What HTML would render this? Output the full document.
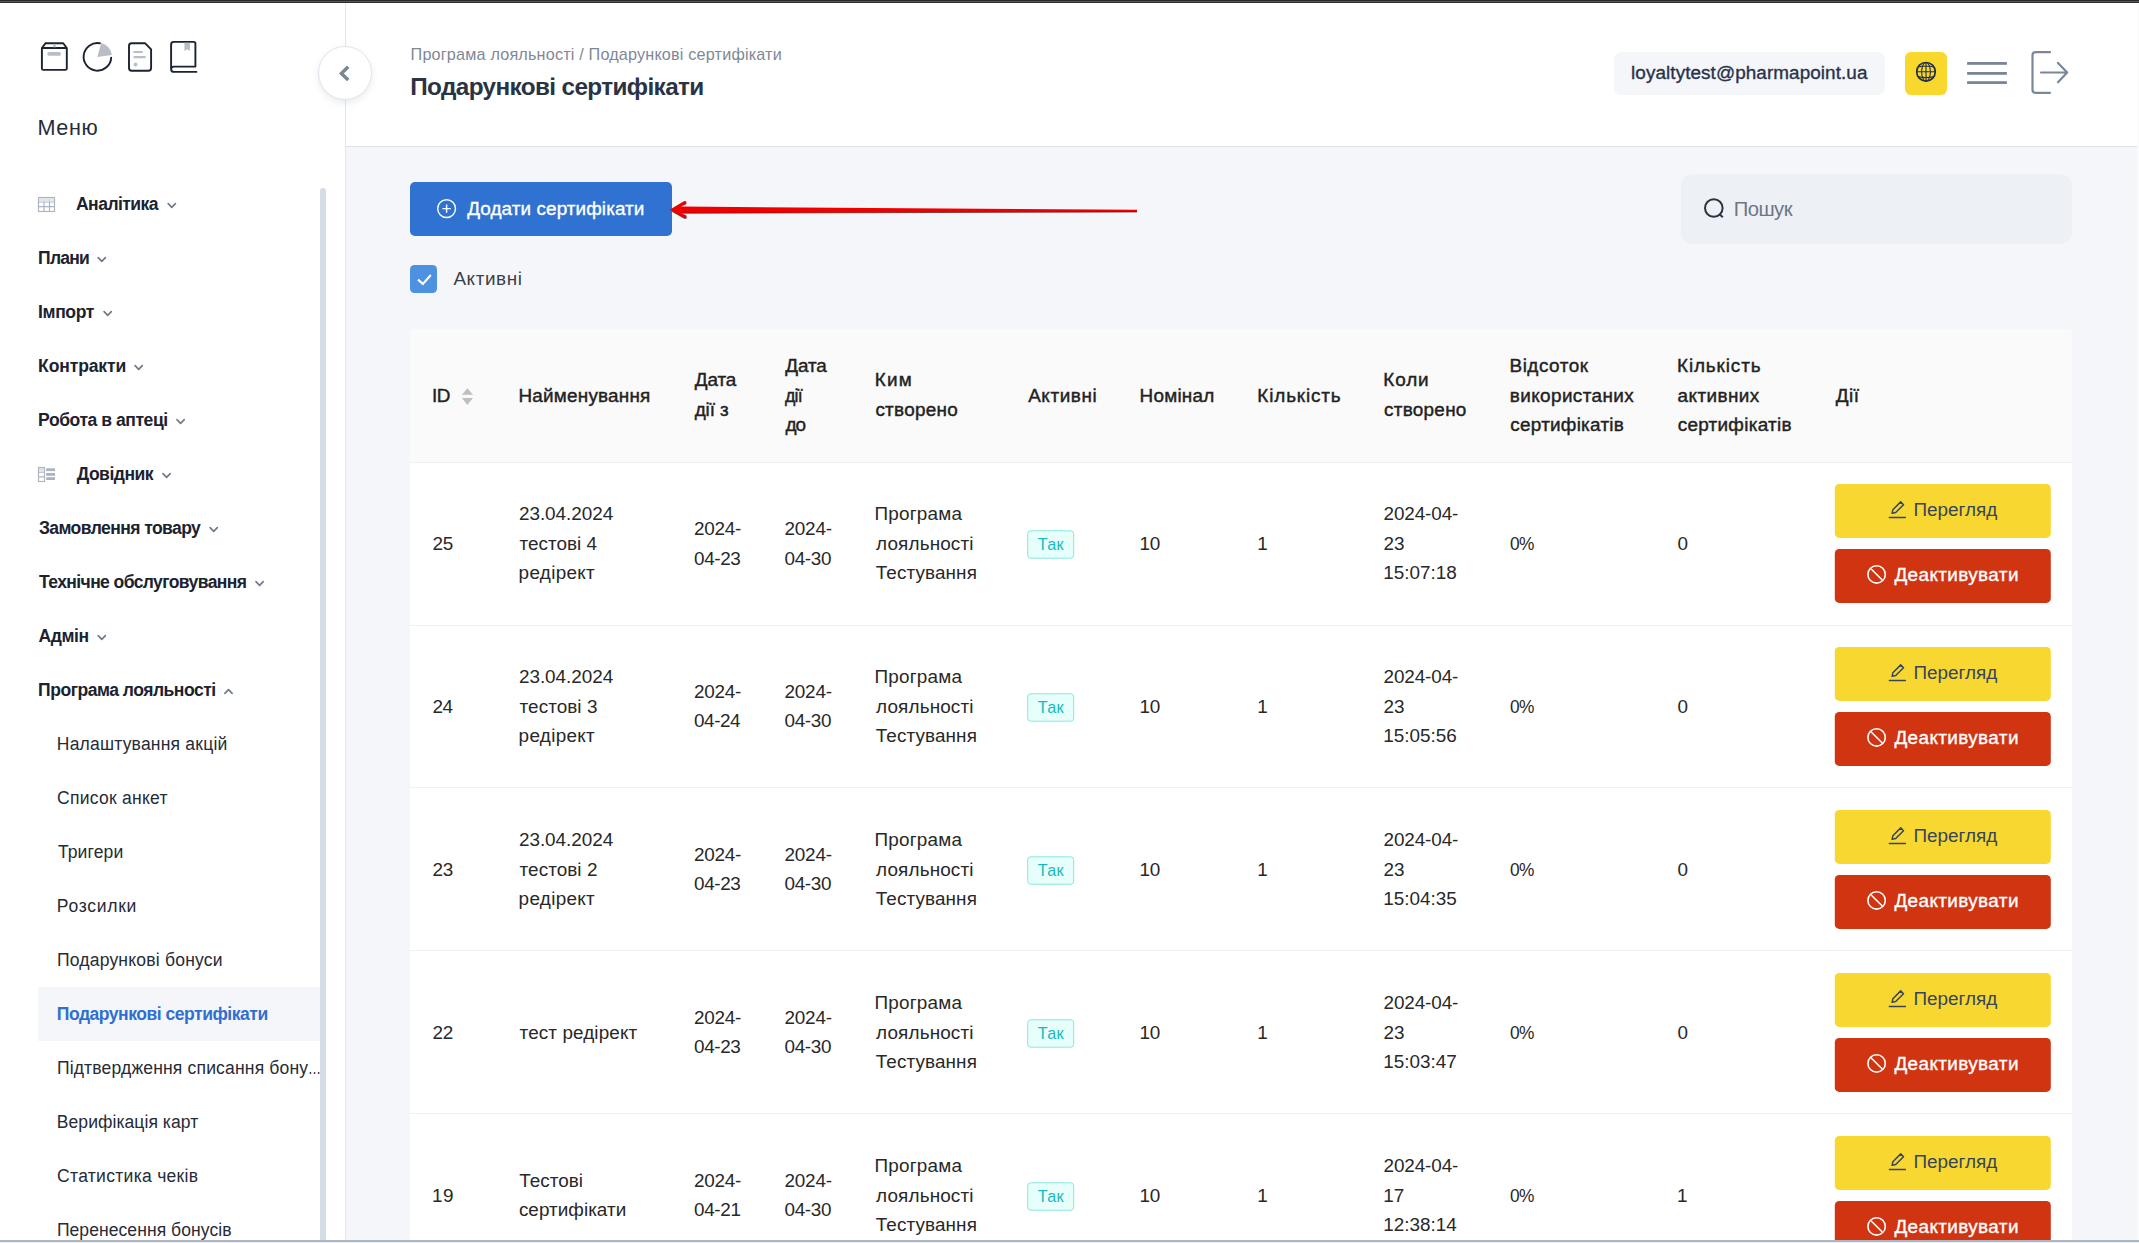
<!DOCTYPE html>
<html lang="uk"><head><meta charset="utf-8"><title>Подарункові сертифікати</title>
<style>
html,body{margin:0;padding:0;}
body{width:2139px;height:1243px;overflow:hidden;position:relative;background:#f5f6fa;font-family:"Liberation Sans",sans-serif;}
.abs{position:absolute;}
.t{position:absolute;white-space:nowrap;margin:0;padding:0;}
.med{-webkit-text-stroke:0.35px currentColor;}
.th{-webkit-text-stroke:0.42px currentColor;}
#side{left:0;top:3px;width:345px;height:1240px;background:#fff;border-right:1px solid #e3e7ee;}
#head{left:346px;top:3px;width:1791px;height:143px;background:#fff;border-bottom:1px solid #dfe5ec;}
#gfx{position:absolute;left:0;top:0;}
</style></head><body>
<div class="abs" id="side"></div>
<div class="abs" id="head"></div>
<div class="abs" style="left:38px;top:987px;width:282px;height:54px;background:#f5f6fa;"></div>
<div class="abs" style="left:318.5px;top:46.5px;width:52px;height:52px;border-radius:50%;background:#fff;border:1px solid #dfe5ed;box-sizing:content-box;box-shadow:0 3px 7px rgba(120,135,160,0.16);margin:-1px 0 0 -1px;"></div>
<div class="abs" style="left:1614px;top:52px;width:271px;height:43px;background:#f5f6fa;border-radius:7px;"></div>
<div class="abs" style="left:1905px;top:52px;width:42px;height:43px;background:#f9d82e;border-radius:6px;"></div>
<div class="abs" style="left:410px;top:182px;width:262px;height:54px;background:#2f72d2;border-radius:5px;"></div>
<div class="abs" style="left:1681px;top:174px;width:391px;height:70px;background:#edf0f5;border-radius:12px;"></div>
<div class="abs" style="left:410px;top:265px;width:27px;height:27.5px;background:#4e90e1;border-radius:4.5px;"></div>
<div class="abs" style="left:410px;top:329px;width:1662px;height:133px;background:#fafafa;border-radius:3px 3px 0 0;"></div>
<div class="abs" style="left:410px;top:462px;width:1662px;height:790px;background:#fff;"></div>
<div class="abs" style="left:410px;top:462px;width:1662px;height:1px;background:#f0f0f0;"></div>
<div class="abs" style="left:410px;top:625px;width:1662px;height:1px;background:#f0f0f0;"></div>
<div class="abs" style="left:410px;top:787px;width:1662px;height:1px;background:#f0f0f0;"></div>
<div class="abs" style="left:410px;top:950px;width:1662px;height:1px;background:#f0f0f0;"></div>
<div class="abs" style="left:410px;top:1113px;width:1662px;height:1px;background:#f0f0f0;"></div>
<svg id="gfx" width="2139" height="1243" viewBox="0 0 2139 1243">
<!-- sidebar top icons -->
<g fill="none" stroke="#1b2332" stroke-width="1.9" stroke-linejoin="round" stroke-linecap="round">
<path d="M41.9 48 L45.6 43.2 H63.2 L66.8 48 V68.4 Q66.8 69.9 65.3 69.9 H43.4 Q41.9 69.9 41.9 68.4 Z M41.9 48 H66.8"/>
<path d="M99.9 43.3 A13.8 13.8 0 1 0 111.2 57.6" />
<path d="M131.6 43.2 H145 L151.1 49.4 V68 Q151.1 70.7 148.4 70.7 H131.6 Q129 70.7 129 68 V45.9 Q129 43.2 131.6 43.2 Z"/>
<path d="M196.4 71.9 H174 Q171.1 71.9 171.1 69.2 V44.4 Q171.1 41.9 173.8 41.9 H193.6 Q195.4 41.9 195.4 43.6 V66.6 H174 Q171.1 66.6 171.1 69.2"/>
</g>
<g fill="#b9bdc5" stroke="none">
<rect x="47.3" y="52" width="13.7" height="3.8" rx="1.9"/>
<rect x="53.3" y="43.9" width="2.4" height="3.4" />
<path d="M97.3 56.9 L101.2 42.9 A14.6 14.6 0 0 1 111.8 54.9 Z"/>
<rect x="133.5" y="50.9" width="9.3" height="2.1" rx="0.6"/>
<rect x="133.5" y="56.1" width="12.2" height="2.1" rx="0.6"/>
<circle cx="135.5" cy="64.5" r="1.9"/>
<path d="M184.4 42.8 H189.9 V51 L187.15 49.2 L184.4 51 Z"/>
</g>
<!-- collapse chevron -->
<path d="M348.2 66.7 L341.4 73.4 L348.2 80.1" fill="none" stroke="#7b8795" stroke-width="3.5" stroke-linejoin="miter"/>
<!-- small menu icons -->
<g fill="none" stroke="#adb4c1" stroke-width="1.15">
<rect x="38.5" y="197.5" width="16" height="14"/>
<path d="M44 197.5 V211.5 M49.5 197.5 V211.5 M38.5 202 H54.5 M38.5 206.6 H54.5"/>
<rect x="38.5" y="467.5" width="6" height="14"/>
<path d="M38.5 472.2 H44.5 M38.5 476.8 H44.5"/>
</g>
<rect x="39" y="198" width="15" height="3.6" fill="#dfe3ea" opacity="0.9"/>
<rect x="39" y="468" width="5" height="3.8" fill="#dfe3ea"/>
<g fill="#aab2bf">
<rect x="46.2" y="468.3" width="8.8" height="2.8"/>
<rect x="46.2" y="473" width="8.8" height="2.8"/>
<rect x="46.2" y="477.2" width="8.8" height="2.8"/>
</g>
<!-- globe -->
<g fill="none" stroke="#232f4a" stroke-width="1.1">
<circle cx="1926" cy="71.8" r="9.3" stroke-width="1.7"/>
<ellipse cx="1926" cy="71.8" rx="4.4" ry="9.3"/>
<path d="M1926 62.4 V81.2 M1916.6 71.8 H1935.4 M1918 67 Q1926 65 1934 67 M1918 76.6 Q1926 78.6 1934 76.6"/>
</g>
<!-- hamburger -->
<g fill="#788698">
<rect x="1967.1" y="62" width="39.8" height="2.8"/>
<rect x="1967.1" y="72" width="39.8" height="2.8"/>
<rect x="1967.1" y="81.2" width="39.8" height="2.8"/>
</g>
<!-- logout -->
<g fill="none" stroke="#7a8797" stroke-width="2.2" stroke-linecap="round" stroke-linejoin="round">
<path d="M2050 52.2 H2035.5 Q2032.5 52.2 2032.5 55.2 V89.8 Q2032.5 92.8 2035.5 92.8 H2050"/>
<path d="M2041 72.5 H2067 M2058 62.9 L2067.2 72.5 L2058 82.3"/>
</g>
<!-- plus-circle -->
<g fill="none" stroke="#ffffff" stroke-width="1.4">
<circle cx="446.6" cy="208.6" r="8.9"/>
<path d="M446.6 204.4 V212.8 M442.4 208.6 H450.8"/>
</g>
<!-- red arrow -->
<path d="M669.6 209.7 L683.9 201.2 Q686.5 200.2 686.5 203 L686.2 204.3 L680.9 206.6 L1137 209.7 L1137 211.9 L680.9 213.3 L686.2 215.3 L686.5 216.6 Q686.5 219.2 683.9 218.1 Z" fill="#ee0000"/>
<path d="M672 211.2 L683.9 218.1 Q686.3 219 686.5 216.8 M681.5 213.3 L1137 211.9" fill="none" stroke="#5e2020" stroke-width="1.1" opacity="0.7"/>
<!-- search icon -->
<g fill="none" stroke="#2a3442" stroke-width="2">
<circle cx="1713.8" cy="208" r="8.8"/>
<path d="M1719.6 214.2 L1722.8 217.2"/>
</g>
<!-- checkbox tick -->
<path d="M418 279.6 L422.9 283.9 L430.8 275" fill="none" stroke="#fff" stroke-width="2.1"/>
<!-- sort icon -->
<path d="M467.4 388.2 L473 394.7 H461.9 Z M461.9 397.9 H473 L467.4 404.9 Z" fill="#bfbfbf"/>
<path d="M168.20000000000002 203.7 L171.8 207.3 L175.4 203.7" fill="none" stroke="#6f7a89" stroke-width="1.7" stroke-linecap="round" stroke-linejoin="round"/>
<path d="M98.2 257.7 L101.8 261.3 L105.39999999999999 257.7" fill="none" stroke="#6f7a89" stroke-width="1.7" stroke-linecap="round" stroke-linejoin="round"/>
<path d="M104.10000000000001 311.7 L107.7 315.3 L111.3 311.7" fill="none" stroke="#6f7a89" stroke-width="1.7" stroke-linecap="round" stroke-linejoin="round"/>
<path d="M135.1 365.7 L138.7 369.3 L142.29999999999998 365.7" fill="none" stroke="#6f7a89" stroke-width="1.7" stroke-linecap="round" stroke-linejoin="round"/>
<path d="M177.0 419.7 L180.6 423.3 L184.2 419.7" fill="none" stroke="#6f7a89" stroke-width="1.7" stroke-linecap="round" stroke-linejoin="round"/>
<path d="M163.0 473.7 L166.6 477.3 L170.2 473.7" fill="none" stroke="#6f7a89" stroke-width="1.7" stroke-linecap="round" stroke-linejoin="round"/>
<path d="M210.1 527.7 L213.7 531.3 L217.29999999999998 527.7" fill="none" stroke="#6f7a89" stroke-width="1.7" stroke-linecap="round" stroke-linejoin="round"/>
<path d="M256.0 581.7 L259.6 585.3 L263.20000000000005 581.7" fill="none" stroke="#6f7a89" stroke-width="1.7" stroke-linecap="round" stroke-linejoin="round"/>
<path d="M98.2 635.7 L101.8 639.3 L105.39999999999999 635.7" fill="none" stroke="#6f7a89" stroke-width="1.7" stroke-linecap="round" stroke-linejoin="round"/>
<path d="M224.9 693.3 L228.5 689.7 L232.1 693.3" fill="none" stroke="#6f7a89" stroke-width="1.7" stroke-linecap="round" stroke-linejoin="round"/>
<rect x="1027.7" y="530.80" width="46" height="27.4" rx="3" fill="#e6fffb" stroke="#87e8de" stroke-width="1"/>
<rect x="1834.8" y="483.90" width="216" height="54" rx="4.5" fill="#f8d830"/>
<rect x="1834.8" y="548.90" width="216" height="54" rx="4.5" fill="#d03411"/>
<g fill="none" stroke="#36465a" stroke-width="1.5" stroke-linecap="round" stroke-linejoin="round"><path d="M1889.40 517.50 H1905.40"/><path d="M1892.10 513.30 L1892.90 509.70 L1900.70 501.90 L1903.50 504.70 L1895.70 512.50 Z"/></g>
<g fill="none" stroke="#ffffff" stroke-width="1.6"><circle cx="1876.6" cy="574.40" r="8.7"/><path d="M1870.45 568.25 L1882.75 580.55"/></g>
<rect x="1027.7" y="693.80" width="46" height="27.4" rx="3" fill="#e6fffb" stroke="#87e8de" stroke-width="1"/>
<rect x="1834.8" y="646.90" width="216" height="54" rx="4.5" fill="#f8d830"/>
<rect x="1834.8" y="711.90" width="216" height="54" rx="4.5" fill="#d03411"/>
<g fill="none" stroke="#36465a" stroke-width="1.5" stroke-linecap="round" stroke-linejoin="round"><path d="M1889.40 680.50 H1905.40"/><path d="M1892.10 676.30 L1892.90 672.70 L1900.70 664.90 L1903.50 667.70 L1895.70 675.50 Z"/></g>
<g fill="none" stroke="#ffffff" stroke-width="1.6"><circle cx="1876.6" cy="737.40" r="8.7"/><path d="M1870.45 731.25 L1882.75 743.55"/></g>
<rect x="1027.7" y="856.80" width="46" height="27.4" rx="3" fill="#e6fffb" stroke="#87e8de" stroke-width="1"/>
<rect x="1834.8" y="809.90" width="216" height="54" rx="4.5" fill="#f8d830"/>
<rect x="1834.8" y="874.90" width="216" height="54" rx="4.5" fill="#d03411"/>
<g fill="none" stroke="#36465a" stroke-width="1.5" stroke-linecap="round" stroke-linejoin="round"><path d="M1889.40 843.50 H1905.40"/><path d="M1892.10 839.30 L1892.90 835.70 L1900.70 827.90 L1903.50 830.70 L1895.70 838.50 Z"/></g>
<g fill="none" stroke="#ffffff" stroke-width="1.6"><circle cx="1876.6" cy="900.40" r="8.7"/><path d="M1870.45 894.25 L1882.75 906.55"/></g>
<rect x="1027.7" y="1019.80" width="46" height="27.4" rx="3" fill="#e6fffb" stroke="#87e8de" stroke-width="1"/>
<rect x="1834.8" y="972.90" width="216" height="54" rx="4.5" fill="#f8d830"/>
<rect x="1834.8" y="1037.90" width="216" height="54" rx="4.5" fill="#d03411"/>
<g fill="none" stroke="#36465a" stroke-width="1.5" stroke-linecap="round" stroke-linejoin="round"><path d="M1889.40 1006.50 H1905.40"/><path d="M1892.10 1002.30 L1892.90 998.70 L1900.70 990.90 L1903.50 993.70 L1895.70 1001.50 Z"/></g>
<g fill="none" stroke="#ffffff" stroke-width="1.6"><circle cx="1876.6" cy="1063.40" r="8.7"/><path d="M1870.45 1057.25 L1882.75 1069.55"/></g>
<rect x="1027.7" y="1182.80" width="46" height="27.4" rx="3" fill="#e6fffb" stroke="#87e8de" stroke-width="1"/>
<rect x="1834.8" y="1135.90" width="216" height="54" rx="4.5" fill="#f8d830"/>
<rect x="1834.8" y="1200.90" width="216" height="54" rx="4.5" fill="#d03411"/>
<g fill="none" stroke="#36465a" stroke-width="1.5" stroke-linecap="round" stroke-linejoin="round"><path d="M1889.40 1169.50 H1905.40"/><path d="M1892.10 1165.30 L1892.90 1161.70 L1900.70 1153.90 L1903.50 1156.70 L1895.70 1164.50 Z"/></g>
<g fill="none" stroke="#ffffff" stroke-width="1.6"><circle cx="1876.6" cy="1226.40" r="8.7"/><path d="M1870.45 1220.25 L1882.75 1232.55"/></g>
</svg>
<nav>
<span class="t" style="left:37.5px;top:112px;font-size:21.6px;line-height:31px;color:#252c3a;letter-spacing:0.633px;">Меню</span>
<span class="t" style="left:76.0px;top:189px;font-size:17.55px;line-height:30px;font-weight:700;color:#1b2230;letter-spacing:-0.537px;">Аналітика</span>
<span class="t" style="left:38.1px;top:243px;font-size:17.55px;line-height:30px;font-weight:700;color:#1b2230;letter-spacing:-0.778px;">Плани</span>
<span class="t" style="left:38.1px;top:297px;font-size:17.55px;line-height:30px;font-weight:700;color:#1b2230;letter-spacing:-0.388px;">Імпорт</span>
<span class="t" style="left:38.1px;top:351px;font-size:17.55px;line-height:30px;font-weight:700;color:#1b2230;letter-spacing:-0.133px;">Контракти</span>
<span class="t" style="left:38.1px;top:405px;font-size:17.55px;line-height:30px;font-weight:700;color:#1b2230;letter-spacing:-0.444px;">Робота в аптеці</span>
<span class="t" style="left:76.7px;top:459px;font-size:17.55px;line-height:30px;font-weight:700;color:#1b2230;letter-spacing:-0.491px;">Довідник</span>
<span class="t" style="left:38.9px;top:513px;font-size:17.55px;line-height:30px;font-weight:700;color:#1b2230;letter-spacing:-0.583px;">Замовлення товару</span>
<span class="t" style="left:39.0px;top:567px;font-size:17.55px;line-height:30px;font-weight:700;color:#1b2230;letter-spacing:-0.602px;">Технічне обслуговування</span>
<span class="t" style="left:38.6px;top:621px;font-size:17.55px;line-height:30px;font-weight:700;color:#1b2230;letter-spacing:-0.459px;">Адмін</span>
<span class="t" style="left:38.1px;top:675px;font-size:17.55px;line-height:30px;font-weight:700;color:#1b2230;letter-spacing:-0.492px;">Програма лояльності</span>
<span class="t" style="left:307.6px;top:1053px;font-size:17.55px;line-height:30px;color:#262b36;transform:scaleX(0.740);transform-origin:0 50%;">…</span>
<span class="t" style="left:56.8px;top:729px;font-size:17.55px;line-height:30px;color:#262b36;letter-spacing:0.194px;">Налаштування акцій</span>
<span class="t" style="left:57.1px;top:783px;font-size:17.55px;line-height:30px;color:#262b36;letter-spacing:0.246px;">Список анкет</span>
<span class="t" style="left:57.9px;top:837px;font-size:17.55px;line-height:30px;color:#262b36;letter-spacing:0.126px;">Тригери</span>
<span class="t" style="left:56.8px;top:891px;font-size:17.55px;line-height:30px;color:#262b36;letter-spacing:0.705px;">Розсилки</span>
<span class="t" style="left:56.9px;top:945px;font-size:17.55px;line-height:30px;color:#262b36;letter-spacing:0.202px;">Подарункові бонуси</span>
<span class="t" style="left:56.8px;top:999px;font-size:17.55px;line-height:30px;font-weight:700;color:#2f6fd1;letter-spacing:-0.481px;">Подарункові сертифікати</span>
<span class="t" style="left:56.9px;top:1053px;font-size:17.55px;line-height:30px;color:#262b36;letter-spacing:0.162px;">Підтвердження списання бону</span>
<span class="t" style="left:56.8px;top:1107px;font-size:17.55px;line-height:30px;color:#262b36;letter-spacing:0.055px;">Верифікація карт</span>
<span class="t" style="left:57.1px;top:1161px;font-size:17.55px;line-height:30px;color:#262b36;letter-spacing:0.283px;">Статистика чеків</span>
<span class="t" style="left:56.9px;top:1215px;font-size:17.55px;line-height:30px;color:#262b36;letter-spacing:0.059px;">Перенесення бонусів</span>
</nav>
<header>
<span class="t" style="left:410.6px;top:39px;font-size:16.2px;line-height:30px;color:#7f8896;letter-spacing:0.181px;">Програма лояльності / Подарункові сертифікати</span>
<span class="t" style="left:410.2px;top:71px;font-size:24.3px;line-height:31px;font-weight:700;color:#2a3344;letter-spacing:-0.616px;">Подарункові сертифікати</span>
<span class="t med" style="left:1631.1px;top:57px;font-size:18.9px;line-height:31px;color:#28324a;letter-spacing:0.075px;">loyaltytest@pharmapoint.ua</span>
</header>
<main>
<span class="t med" style="left:467.2px;top:193px;font-size:18.9px;line-height:31px;color:#ffffff;letter-spacing:0.094px;">Додати сертифікати</span>
<span class="t" style="left:1733.7px;top:194px;font-size:20.2px;line-height:30px;color:#6c7686;letter-spacing:-0.500px;">Пошук</span>
<span class="t" style="left:453.4px;top:263px;font-size:18.9px;line-height:31px;color:#3a3f4a;letter-spacing:0.613px;">Активні</span>
<span class="t th" style="left:432.0px;top:380px;font-size:18.9px;line-height:31px;color:#222222;letter-spacing:-0.542px;">ID</span>
<span class="t th" style="left:518.5px;top:380px;font-size:18.9px;line-height:31px;color:#222222;letter-spacing:0.211px;">Найменування</span>
<span class="t th" style="left:694.8px;top:364px;font-size:18.9px;line-height:31px;color:#222222;letter-spacing:-0.150px;">Дата</span>
<span class="t th" style="left:694.7px;top:394px;font-size:18.9px;line-height:31px;color:#222222;letter-spacing:-0.092px;">дії з</span>
<span class="t th" style="left:785.3px;top:350px;font-size:18.9px;line-height:31px;color:#222222;letter-spacing:-0.088px;">Дата</span>
<span class="t th" style="left:785.3px;top:380px;font-size:18.9px;line-height:31px;color:#222222;letter-spacing:-0.864px;transform:scaleX(0.939);transform-origin:0 50%;">дії</span>
<span class="t th" style="left:785.4px;top:409px;font-size:18.9px;line-height:31px;color:#222222;letter-spacing:-0.810px;">до</span>
<span class="t th" style="left:874.8px;top:364px;font-size:18.9px;line-height:31px;color:#222222;letter-spacing:1.200px;">Ким</span>
<span class="t th" style="left:875.4px;top:394px;font-size:18.9px;line-height:31px;color:#222222;letter-spacing:0.272px;">створено</span>
<span class="t th" style="left:1028.2px;top:380px;font-size:18.9px;line-height:31px;color:#222222;letter-spacing:0.582px;">Активні</span>
<span class="t th" style="left:1139.6px;top:380px;font-size:18.9px;line-height:31px;color:#222222;letter-spacing:0.226px;">Номінал</span>
<span class="t th" style="left:1257.3px;top:380px;font-size:18.9px;line-height:31px;color:#222222;letter-spacing:0.869px;">Кількість</span>
<span class="t th" style="left:1383.3px;top:364px;font-size:18.9px;line-height:31px;color:#222222;letter-spacing:0.897px;">Коли</span>
<span class="t th" style="left:1384.1px;top:394px;font-size:18.9px;line-height:31px;color:#222222;letter-spacing:0.269px;">створено</span>
<span class="t th" style="left:1509.5px;top:350px;font-size:18.9px;line-height:31px;color:#222222;letter-spacing:0.530px;">Відсоток</span>
<span class="t th" style="left:1509.8px;top:380px;font-size:18.9px;line-height:31px;color:#222222;letter-spacing:0.407px;">використаних</span>
<span class="t th" style="left:1510.3px;top:409px;font-size:18.9px;line-height:31px;color:#222222;letter-spacing:0.262px;">сертифікатів</span>
<span class="t th" style="left:1677.0px;top:350px;font-size:18.9px;line-height:31px;color:#222222;letter-spacing:0.881px;">Кількість</span>
<span class="t th" style="left:1677.6px;top:380px;font-size:18.9px;line-height:31px;color:#222222;letter-spacing:0.428px;">активних</span>
<span class="t th" style="left:1677.7px;top:409px;font-size:18.9px;line-height:31px;color:#222222;letter-spacing:0.286px;">сертифікатів</span>
<span class="t th" style="left:1835.8px;top:380px;font-size:18.9px;line-height:31px;color:#222222;letter-spacing:0.515px;">Дії</span>
<span class="t" style="left:432.4px;top:528px;font-size:18.9px;line-height:31px;color:#282828;letter-spacing:-0.189px;">25</span>
<span class="t" style="left:518.9px;top:498px;font-size:18.9px;line-height:31px;color:#282828;letter-spacing:-0.012px;">23.04.2024</span>
<span class="t" style="left:519.6px;top:528px;font-size:18.9px;line-height:31px;color:#282828;letter-spacing:0.020px;">тестові 4</span>
<span class="t" style="left:518.6px;top:557px;font-size:18.9px;line-height:31px;color:#282828;letter-spacing:0.311px;">редірект</span>
<span class="t" style="left:693.9px;top:513px;font-size:18.9px;line-height:31px;color:#282828;letter-spacing:-0.222px;">2024-</span>
<span class="t" style="left:694.1px;top:543px;font-size:18.9px;line-height:31px;color:#282828;letter-spacing:-0.393px;">04-23</span>
<span class="t" style="left:784.4px;top:513px;font-size:18.9px;line-height:31px;color:#282828;letter-spacing:-0.175px;">2024-</span>
<span class="t" style="left:784.5px;top:543px;font-size:18.9px;line-height:31px;color:#282828;letter-spacing:-0.337px;">04-30</span>
<span class="t" style="left:874.5px;top:498px;font-size:18.9px;line-height:31px;color:#282828;letter-spacing:0.216px;">Програма</span>
<span class="t" style="left:876.1px;top:528px;font-size:18.9px;line-height:31px;color:#282828;letter-spacing:0.141px;">лояльності</span>
<span class="t" style="left:875.7px;top:557px;font-size:18.9px;line-height:31px;color:#282828;letter-spacing:0.117px;">Тестування</span>
<span class="t" style="left:1037.8px;top:529px;font-size:16.2px;line-height:30px;color:#16b9bd;letter-spacing:0.250px;">Так</span>
<span class="t" style="left:1139.5px;top:528px;font-size:18.9px;line-height:31px;color:#282828;letter-spacing:-0.179px;">10</span>
<span class="t" style="left:1257.2px;top:528px;font-size:18.9px;line-height:31px;color:#282828;">1</span>
<span class="t" style="left:1383.6px;top:498px;font-size:18.9px;line-height:31px;color:#282828;letter-spacing:-0.124px;">2024-04-</span>
<span class="t" style="left:1383.6px;top:528px;font-size:18.9px;line-height:31px;color:#282828;">23</span>
<span class="t" style="left:1383.2px;top:557px;font-size:18.9px;line-height:31px;color:#282828;">15:07:18</span>
<span class="t" style="left:1510.2px;top:528px;font-size:18.9px;line-height:31px;color:#282828;letter-spacing:-0.700px;transform:scaleX(0.916);transform-origin:0 50%;">0%</span>
<span class="t" style="left:1677.6px;top:528px;font-size:18.9px;line-height:31px;color:#282828;">0</span>
<span class="t" style="left:1913.5px;top:494px;font-size:18.9px;line-height:31px;color:#36465a;letter-spacing:0.001px;">Перегляд</span>
<span class="t med" style="left:1894.4px;top:559px;font-size:18.9px;line-height:31px;color:#ffffff;letter-spacing:0.397px;">Деактивувати</span>
<span class="t" style="left:432.4px;top:691px;font-size:18.9px;line-height:31px;color:#282828;letter-spacing:-0.416px;">24</span>
<span class="t" style="left:518.9px;top:661px;font-size:18.9px;line-height:31px;color:#282828;letter-spacing:-0.012px;">23.04.2024</span>
<span class="t" style="left:519.6px;top:691px;font-size:18.9px;line-height:31px;color:#282828;letter-spacing:0.061px;">тестові 3</span>
<span class="t" style="left:518.6px;top:720px;font-size:18.9px;line-height:31px;color:#282828;letter-spacing:0.311px;">редірект</span>
<span class="t" style="left:693.9px;top:676px;font-size:18.9px;line-height:31px;color:#282828;letter-spacing:-0.222px;">2024-</span>
<span class="t" style="left:694.1px;top:705px;font-size:18.9px;line-height:31px;color:#282828;letter-spacing:-0.479px;">04-24</span>
<span class="t" style="left:784.4px;top:676px;font-size:18.9px;line-height:31px;color:#282828;letter-spacing:-0.175px;">2024-</span>
<span class="t" style="left:784.5px;top:705px;font-size:18.9px;line-height:31px;color:#282828;letter-spacing:-0.337px;">04-30</span>
<span class="t" style="left:874.5px;top:661px;font-size:18.9px;line-height:31px;color:#282828;letter-spacing:0.216px;">Програма</span>
<span class="t" style="left:876.1px;top:691px;font-size:18.9px;line-height:31px;color:#282828;letter-spacing:0.141px;">лояльності</span>
<span class="t" style="left:875.7px;top:720px;font-size:18.9px;line-height:31px;color:#282828;letter-spacing:0.117px;">Тестування</span>
<span class="t" style="left:1037.8px;top:692px;font-size:16.2px;line-height:30px;color:#16b9bd;letter-spacing:0.250px;">Так</span>
<span class="t" style="left:1139.5px;top:691px;font-size:18.9px;line-height:31px;color:#282828;letter-spacing:-0.179px;">10</span>
<span class="t" style="left:1257.2px;top:691px;font-size:18.9px;line-height:31px;color:#282828;">1</span>
<span class="t" style="left:1383.6px;top:661px;font-size:18.9px;line-height:31px;color:#282828;letter-spacing:-0.124px;">2024-04-</span>
<span class="t" style="left:1383.6px;top:691px;font-size:18.9px;line-height:31px;color:#282828;">23</span>
<span class="t" style="left:1383.2px;top:720px;font-size:18.9px;line-height:31px;color:#282828;">15:05:56</span>
<span class="t" style="left:1510.2px;top:691px;font-size:18.9px;line-height:31px;color:#282828;letter-spacing:-0.700px;transform:scaleX(0.916);transform-origin:0 50%;">0%</span>
<span class="t" style="left:1677.6px;top:691px;font-size:18.9px;line-height:31px;color:#282828;">0</span>
<span class="t" style="left:1913.5px;top:657px;font-size:18.9px;line-height:31px;color:#36465a;letter-spacing:0.001px;">Перегляд</span>
<span class="t med" style="left:1894.4px;top:722px;font-size:18.9px;line-height:31px;color:#ffffff;letter-spacing:0.397px;">Деактивувати</span>
<span class="t" style="left:432.4px;top:854px;font-size:18.9px;line-height:31px;color:#282828;letter-spacing:-0.080px;">23</span>
<span class="t" style="left:518.9px;top:824px;font-size:18.9px;line-height:31px;color:#282828;letter-spacing:-0.012px;">23.04.2024</span>
<span class="t" style="left:519.6px;top:854px;font-size:18.9px;line-height:31px;color:#282828;letter-spacing:0.058px;">тестові 2</span>
<span class="t" style="left:518.6px;top:883px;font-size:18.9px;line-height:31px;color:#282828;letter-spacing:0.311px;">редірект</span>
<span class="t" style="left:693.9px;top:839px;font-size:18.9px;line-height:31px;color:#282828;letter-spacing:-0.222px;">2024-</span>
<span class="t" style="left:694.1px;top:868px;font-size:18.9px;line-height:31px;color:#282828;letter-spacing:-0.393px;">04-23</span>
<span class="t" style="left:784.4px;top:839px;font-size:18.9px;line-height:31px;color:#282828;letter-spacing:-0.175px;">2024-</span>
<span class="t" style="left:784.5px;top:868px;font-size:18.9px;line-height:31px;color:#282828;letter-spacing:-0.337px;">04-30</span>
<span class="t" style="left:874.5px;top:824px;font-size:18.9px;line-height:31px;color:#282828;letter-spacing:0.216px;">Програма</span>
<span class="t" style="left:876.1px;top:854px;font-size:18.9px;line-height:31px;color:#282828;letter-spacing:0.141px;">лояльності</span>
<span class="t" style="left:875.7px;top:883px;font-size:18.9px;line-height:31px;color:#282828;letter-spacing:0.117px;">Тестування</span>
<span class="t" style="left:1037.8px;top:855px;font-size:16.2px;line-height:30px;color:#16b9bd;letter-spacing:0.250px;">Так</span>
<span class="t" style="left:1139.5px;top:854px;font-size:18.9px;line-height:31px;color:#282828;letter-spacing:-0.179px;">10</span>
<span class="t" style="left:1257.2px;top:854px;font-size:18.9px;line-height:31px;color:#282828;">1</span>
<span class="t" style="left:1383.6px;top:824px;font-size:18.9px;line-height:31px;color:#282828;letter-spacing:-0.124px;">2024-04-</span>
<span class="t" style="left:1383.6px;top:854px;font-size:18.9px;line-height:31px;color:#282828;">23</span>
<span class="t" style="left:1383.2px;top:883px;font-size:18.9px;line-height:31px;color:#282828;">15:04:35</span>
<span class="t" style="left:1510.2px;top:854px;font-size:18.9px;line-height:31px;color:#282828;letter-spacing:-0.700px;transform:scaleX(0.916);transform-origin:0 50%;">0%</span>
<span class="t" style="left:1677.6px;top:854px;font-size:18.9px;line-height:31px;color:#282828;">0</span>
<span class="t" style="left:1913.5px;top:820px;font-size:18.9px;line-height:31px;color:#36465a;letter-spacing:0.001px;">Перегляд</span>
<span class="t med" style="left:1894.4px;top:885px;font-size:18.9px;line-height:31px;color:#ffffff;letter-spacing:0.397px;">Деактивувати</span>
<span class="t" style="left:432.4px;top:1017px;font-size:18.9px;line-height:31px;color:#282828;letter-spacing:-0.096px;">22</span>
<span class="t" style="left:519.6px;top:1017px;font-size:18.9px;line-height:31px;color:#282828;letter-spacing:0.106px;">тест редірект</span>
<span class="t" style="left:693.9px;top:1002px;font-size:18.9px;line-height:31px;color:#282828;letter-spacing:-0.222px;">2024-</span>
<span class="t" style="left:694.1px;top:1031px;font-size:18.9px;line-height:31px;color:#282828;letter-spacing:-0.393px;">04-23</span>
<span class="t" style="left:784.4px;top:1002px;font-size:18.9px;line-height:31px;color:#282828;letter-spacing:-0.175px;">2024-</span>
<span class="t" style="left:784.5px;top:1031px;font-size:18.9px;line-height:31px;color:#282828;letter-spacing:-0.337px;">04-30</span>
<span class="t" style="left:874.5px;top:987px;font-size:18.9px;line-height:31px;color:#282828;letter-spacing:0.216px;">Програма</span>
<span class="t" style="left:876.1px;top:1017px;font-size:18.9px;line-height:31px;color:#282828;letter-spacing:0.141px;">лояльності</span>
<span class="t" style="left:875.7px;top:1046px;font-size:18.9px;line-height:31px;color:#282828;letter-spacing:0.117px;">Тестування</span>
<span class="t" style="left:1037.8px;top:1018px;font-size:16.2px;line-height:30px;color:#16b9bd;letter-spacing:0.250px;">Так</span>
<span class="t" style="left:1139.5px;top:1017px;font-size:18.9px;line-height:31px;color:#282828;letter-spacing:-0.179px;">10</span>
<span class="t" style="left:1257.2px;top:1017px;font-size:18.9px;line-height:31px;color:#282828;">1</span>
<span class="t" style="left:1383.6px;top:987px;font-size:18.9px;line-height:31px;color:#282828;letter-spacing:-0.124px;">2024-04-</span>
<span class="t" style="left:1383.6px;top:1017px;font-size:18.9px;line-height:31px;color:#282828;">23</span>
<span class="t" style="left:1383.2px;top:1046px;font-size:18.9px;line-height:31px;color:#282828;">15:03:47</span>
<span class="t" style="left:1510.2px;top:1017px;font-size:18.9px;line-height:31px;color:#282828;letter-spacing:-0.700px;transform:scaleX(0.916);transform-origin:0 50%;">0%</span>
<span class="t" style="left:1677.6px;top:1017px;font-size:18.9px;line-height:31px;color:#282828;">0</span>
<span class="t" style="left:1913.5px;top:983px;font-size:18.9px;line-height:31px;color:#36465a;letter-spacing:0.001px;">Перегляд</span>
<span class="t med" style="left:1894.4px;top:1048px;font-size:18.9px;line-height:31px;color:#ffffff;letter-spacing:0.397px;">Деактивувати</span>
<span class="t" style="left:432.1px;top:1180px;font-size:18.9px;line-height:31px;color:#282828;letter-spacing:0.326px;">19</span>
<span class="t" style="left:519.3px;top:1165px;font-size:18.9px;line-height:31px;color:#282828;letter-spacing:0.026px;">Тестові</span>
<span class="t" style="left:518.9px;top:1194px;font-size:18.9px;line-height:31px;color:#282828;letter-spacing:0.039px;">сертифікати</span>
<span class="t" style="left:693.9px;top:1165px;font-size:18.9px;line-height:31px;color:#282828;letter-spacing:-0.222px;">2024-</span>
<span class="t" style="left:694.1px;top:1194px;font-size:18.9px;line-height:31px;color:#282828;letter-spacing:-0.367px;">04-21</span>
<span class="t" style="left:784.4px;top:1165px;font-size:18.9px;line-height:31px;color:#282828;letter-spacing:-0.175px;">2024-</span>
<span class="t" style="left:784.5px;top:1194px;font-size:18.9px;line-height:31px;color:#282828;letter-spacing:-0.337px;">04-30</span>
<span class="t" style="left:874.5px;top:1150px;font-size:18.9px;line-height:31px;color:#282828;letter-spacing:0.216px;">Програма</span>
<span class="t" style="left:876.1px;top:1180px;font-size:18.9px;line-height:31px;color:#282828;letter-spacing:0.141px;">лояльності</span>
<span class="t" style="left:875.7px;top:1209px;font-size:18.9px;line-height:31px;color:#282828;letter-spacing:0.117px;">Тестування</span>
<span class="t" style="left:1037.8px;top:1181px;font-size:16.2px;line-height:30px;color:#16b9bd;letter-spacing:0.250px;">Так</span>
<span class="t" style="left:1139.5px;top:1180px;font-size:18.9px;line-height:31px;color:#282828;letter-spacing:-0.179px;">10</span>
<span class="t" style="left:1257.2px;top:1180px;font-size:18.9px;line-height:31px;color:#282828;">1</span>
<span class="t" style="left:1383.6px;top:1150px;font-size:18.9px;line-height:31px;color:#282828;letter-spacing:-0.124px;">2024-04-</span>
<span class="t" style="left:1383.2px;top:1180px;font-size:18.9px;line-height:31px;color:#282828;">17</span>
<span class="t" style="left:1383.2px;top:1209px;font-size:18.9px;line-height:31px;color:#282828;">12:38:14</span>
<span class="t" style="left:1510.2px;top:1180px;font-size:18.9px;line-height:31px;color:#282828;letter-spacing:-0.700px;transform:scaleX(0.916);transform-origin:0 50%;">0%</span>
<span class="t" style="left:1676.9px;top:1180px;font-size:18.9px;line-height:31px;color:#282828;">1</span>
<span class="t" style="left:1913.5px;top:1146px;font-size:18.9px;line-height:31px;color:#36465a;letter-spacing:0.001px;">Перегляд</span>
<span class="t med" style="left:1894.4px;top:1211px;font-size:18.9px;line-height:31px;color:#ffffff;letter-spacing:0.397px;">Деактивувати</span>
</main>
<div class="abs" style="left:320px;top:188px;width:6px;height:1060px;background:#d5dce6;border-radius:4px;"></div>
<div class="abs" style="left:0;top:0;width:2139px;height:3px;background:linear-gradient(#2a2a2a 0,#2a2a2a 33%,#565656 34%,#565656 66%,#303030 67%);"></div>
<div class="abs" style="left:2137px;top:3px;width:2px;height:1237px;background:#fafbfc;"></div>
<div class="abs" style="left:0;top:1240px;width:2139px;height:2px;background:#b1b7c0;"></div>
<div class="abs" style="left:0;top:1242px;width:2139px;height:1px;background:#e6eef7;"></div>
</body></html>
